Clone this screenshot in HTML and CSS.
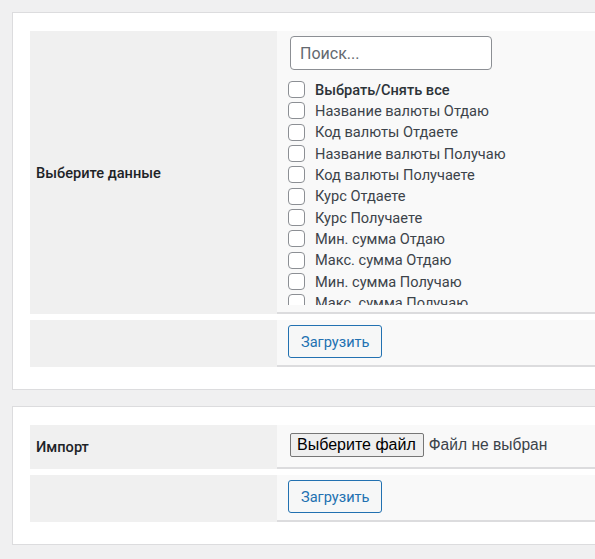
FILE: index.html
```html
<!DOCTYPE html>
<html lang="ru">
<head>
<meta charset="utf-8">
<title>Экспорт / Импорт</title>
<link rel="stylesheet" href="styles.css">
</head>
<body>
<div class="page">
  <section class="card card--first">
    <div class="rows">
      <div class="row">
        <div class="th">Выберите данные</div>
        <div class="td td--tall">
          <input class="search" type="text" placeholder="Поиск...">
          <div class="list">
            <label class="item item--all"><span class="box"></span>Выбрать/Снять все</label>
            <label class="item"><span class="box"></span>Название валюты Отдаю</label>
            <label class="item"><span class="box"></span>Код валюты Отдаете</label>
            <label class="item"><span class="box"></span>Название валюты Получаю</label>
            <label class="item"><span class="box"></span>Код валюты Получаете</label>
            <label class="item"><span class="box"></span>Курс Отдаете</label>
            <label class="item"><span class="box"></span>Курс Получаете</label>
            <label class="item"><span class="box"></span>Мин. сумма Отдаю</label>
            <label class="item"><span class="box"></span>Макс. сумма Отдаю</label>
            <label class="item"><span class="box"></span>Мин. сумма Получаю</label>
            <label class="item"><span class="box"></span>Макс. сумма Получаю</label>
            <label class="item"><span class="box"></span>Резерв</label>
          </div>
        </div>
      </div>
      <div class="row">
        <div class="th"></div>
        <div class="td"><button class="btn" type="button">Загрузить</button></div>
      </div>
    </div>
  </section>
  <section class="card card--second">
    <div class="rows">
      <div class="row">
        <div class="th">Импорт</div>
        <div class="td td--file">
          <span class="filebtn">Выберите файл</span><span class="filename">Файл не выбран</span>
        </div>
      </div>
      <div class="row">
        <div class="th"></div>
        <div class="td"><button class="btn" type="button">Загрузить</button></div>
      </div>
    </div>
  </section>
</div>
</body>
</html>
```
FILE: styles.css
```css
html, body {
  margin: 0;
  padding: 0;
  background: #f0f0f1;
  overflow: hidden;
}
body {
  font-family: Roboto, "Noto Sans", sans-serif;
  font-size: 14.6px;
  color: #3c434a;
}
.page {
  width: 900px;
  padding: 12px 0 0 12px;
}
.card {
  background: #fff;
  border: 1px solid #dcdcde;
  padding: 18px 17px 22px;
}
.card--second {
  margin-top: 16px;
}
.rows {
  display: flex;
  flex-direction: column;
  gap: 6px;
}
.row {
  display: flex;
}
.th {
  width: 241px;
  flex: none;
  background: #f0f0f0;
  padding-left: 6px;
  display: flex;
  align-items: center;
  font-weight: 500;
  color: #1d2327;
}
.td {
  flex: 1;
  background: #f9f9f9;
  border-bottom: 2px solid #dcdcde;
  padding: 5px 11px 7px;
}
.search {
  display: block;
  box-sizing: border-box;
  width: 202px;
  height: 34px;
  margin: 0 0 0 2px;
  border: 1px solid #8c8f94;
  border-radius: 4px;
  background: #fff;
  padding: 0 9px;
  font-family: Roboto, sans-serif;
  font-size: 16px;
  color: #2c3338;
  outline: none;
}
.search::placeholder {
  color: #646970;
}
.list {
  margin-top: 9px;
  height: 226px;
  overflow: hidden;
}
.item {
  display: flex;
  align-items: center;
  height: 21.33px;
  white-space: nowrap;
}
.item--all {
  font-weight: 500;
  color: #2c3338;
}
.box {
  box-sizing: border-box;
  width: 17px;
  height: 17px;
  border: 1px solid #8c8f94;
  border-radius: 4px;
  background: #fff;
  margin-right: 10px;
  flex: none;
}
.btn {
  box-sizing: border-box;
  width: 94px;
  height: 33px;
  border: 1px solid #2271b1;
  border-radius: 3px;
  background: #f6f7f7;
  color: #2271b1;
  font-family: Roboto, sans-serif;
  font-size: 14.6px;
  padding: 0 12px;
  text-align: left;
  display: block;
}
.td--file {
  display: flex;
  align-items: center;
  height: 30px;
  padding-left: 13px;
  font-family: "Liberation Sans", Arial, sans-serif;
  font-size: 16px;
}
.filebtn {
  box-sizing: border-box;
  height: 24px;
  display: flex;
  align-items: center;
  padding: 0 7px 0 6px;
  background: #efefef;
  border: 1px solid #767676;
  border-radius: 2px;
  color: #000;
}
.filename {
  margin-left: 5px;
  color: #3c434a;
  font-size: 15.6px;
}
```
